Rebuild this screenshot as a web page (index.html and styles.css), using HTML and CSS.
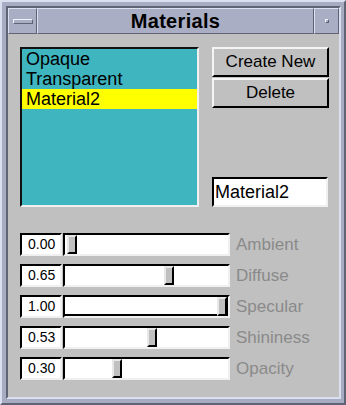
FILE: index.html
```html
<!DOCTYPE html>
<html lang="en">
<head>
  <meta charset="UTF-8" />
  <title>Materials</title>
  <link rel="stylesheet" href="styles.css">
</head>
<body>
  <div class="window">
    <div class="inner">
      <div class="titlebar">
        <div class="tb-btn menu-btn"><span class="menu-bar"></span></div>
        <div class="tb-title">Materials</div>
        <div class="tb-btn min-btn"><span class="min-dot"></span></div>
      </div>

      <div class="content">
        <div class="top">
          <div class="listbox">
            <div class="item">Opaque</div>
            <div class="item">Transparent</div>
            <div class="item selected">Material2</div>
          </div>
          <div class="side">
            <button class="btn">Create New</button>
            <button class="btn">Delete</button>
            <div class="namefield">Material2</div>
          </div>
        </div>

        <div class="sliders">
          <div class="row">
            <div class="value">0.00</div>
            <div class="trough"><span class="thumb" style="margin-left: 0px"></span></div>
            <div class="label">Ambient</div>
          </div>
          <div class="row">
            <div class="value">0.65</div>
            <div class="trough"><span class="thumb" style="margin-left: 97px"></span></div>
            <div class="label">Diffuse</div>
          </div>
          <div class="row">
            <div class="value">1.00</div>
            <div class="trough focus"><span class="thumb" style="margin-left: 150px"></span></div>
            <div class="label">Specular</div>
          </div>
          <div class="row">
            <div class="value">0.53</div>
            <div class="trough"><span class="thumb" style="margin-left: 80px"></span></div>
            <div class="label">Shininess</div>
          </div>
          <div class="row">
            <div class="value">0.30</div>
            <div class="trough"><span class="thumb" style="margin-left: 45px"></span></div>
            <div class="label">Opacity</div>
          </div>
        </div>
      </div>
    </div>
  </div>
</body>
</html>
```

FILE: styles.css
```css
* {
  box-sizing: border-box;
}

body {
  margin: 0;
  font-family: "Liberation Sans", Arial, sans-serif;
  color: #000;
}

.window {
  width: 346px;
  height: 405px;
  background-color: #a8acc2;
  border: 2px solid;
  border-color: #dcdff0 #5f6374 #5f6374 #dcdff0;
  padding: 4px;
  display: flex;
}

.inner {
  flex: 1;
  display: flex;
  flex-direction: column;
  border: 2px solid;
  border-color: #5f6374 #dcdff0 #dcdff0 #5f6374;
}

/* title bar */
.titlebar {
  display: flex;
  height: 26px;
}

.tb-btn,
.tb-title {
  background-color: #aaaec4;
  border: 1px solid;
  border-color: #dcdff0 #5f6374 #5f6374 #dcdff0;
  display: flex;
  align-items: center;
  justify-content: center;
}

.menu-btn {
  width: 29px;
}

.min-btn {
  width: 25px;
}

.tb-title {
  flex: 1;
  font-size: 20px;
  font-weight: bold;
  letter-spacing: 0.3px;
}

.menu-bar {
  width: 20px;
  height: 5px;
  background-color: #aaaec4;
  border: 1px solid;
  border-color: #f0f2ff #5f6374 #5f6374 #f0f2ff;
}

.min-dot {
  width: 4px;
  height: 4px;
  border: 1px solid;
  border-color: #f0f2ff #5f6374 #5f6374 #f0f2ff;
}

/* main area */
.content {
  flex: 1;
  background-color: #c0c0c0;
  padding: 13px 10px 0 12px;
}

.top {
  display: flex;
  gap: 13px;
  height: 160px;
}

.listbox {
  width: 179px;
  height: 160px;
  background-color: #3eb5bf;
  border: 2px solid;
  border-color: #111 #f0f0f0 #f0f0f0 #111;
  font-size: 18px;
}

.item {
  height: 20px;
  line-height: 20px;
  padding-left: 4px;
}

.item.selected {
  background-color: #ffff00;
}

.side {
  width: 117px;
  display: flex;
  flex-direction: column;
}

.btn {
  height: 30px;
  margin-bottom: 1px;
  background-color: #c0c0c0;
  border: 2px solid;
  border-color: #f4f4f4 #000 #000 #f4f4f4;
  font-family: "Liberation Sans", Arial, sans-serif;
  font-size: 17px;
  padding: 0;
  color: #000;
}

.namefield {
  margin-top: auto;
  height: 30px;
  width: 116px;
  background-color: #fff;
  border: 2px solid;
  border-color: #000 #f0f0f0 #f0f0f0 #000;
  font-size: 18px;
  line-height: 26px;
  padding-left: 1px;
}

/* sliders */
.sliders {
  margin-top: 26px;
  display: flex;
  flex-direction: column;
  gap: 8px;
}

.row {
  display: flex;
  align-items: center;
  height: 23px;
}

.value {
  width: 42px;
  height: 23px;
  background-color: #fff;
  border: 2px solid;
  border-color: #000 #f0f0f0 #f0f0f0 #000;
  font-size: 14px;
  line-height: 19px;
  padding-left: 6px;
}

.trough {
  width: 167px;
  height: 23px;
  margin-left: 1px;
  background-color: #fff;
  border: 2px solid;
  border-color: #000 #f0f0f0 #f0f0f0 #000;
  padding-left: 2px;
  display: flex;
}

.trough.focus {
  box-shadow: inset -2px -2px 0 #000;
}

.thumb {
  width: 10px;
  height: 100%;
  background-color: #c0c0c0;
  border: 2px solid;
  border-color: #e8e8e8 #000 #000 #e8e8e8;
}

.label {
  margin-left: 6px;
  font-size: 17px;
  color: #8a8a8a;
}
```
